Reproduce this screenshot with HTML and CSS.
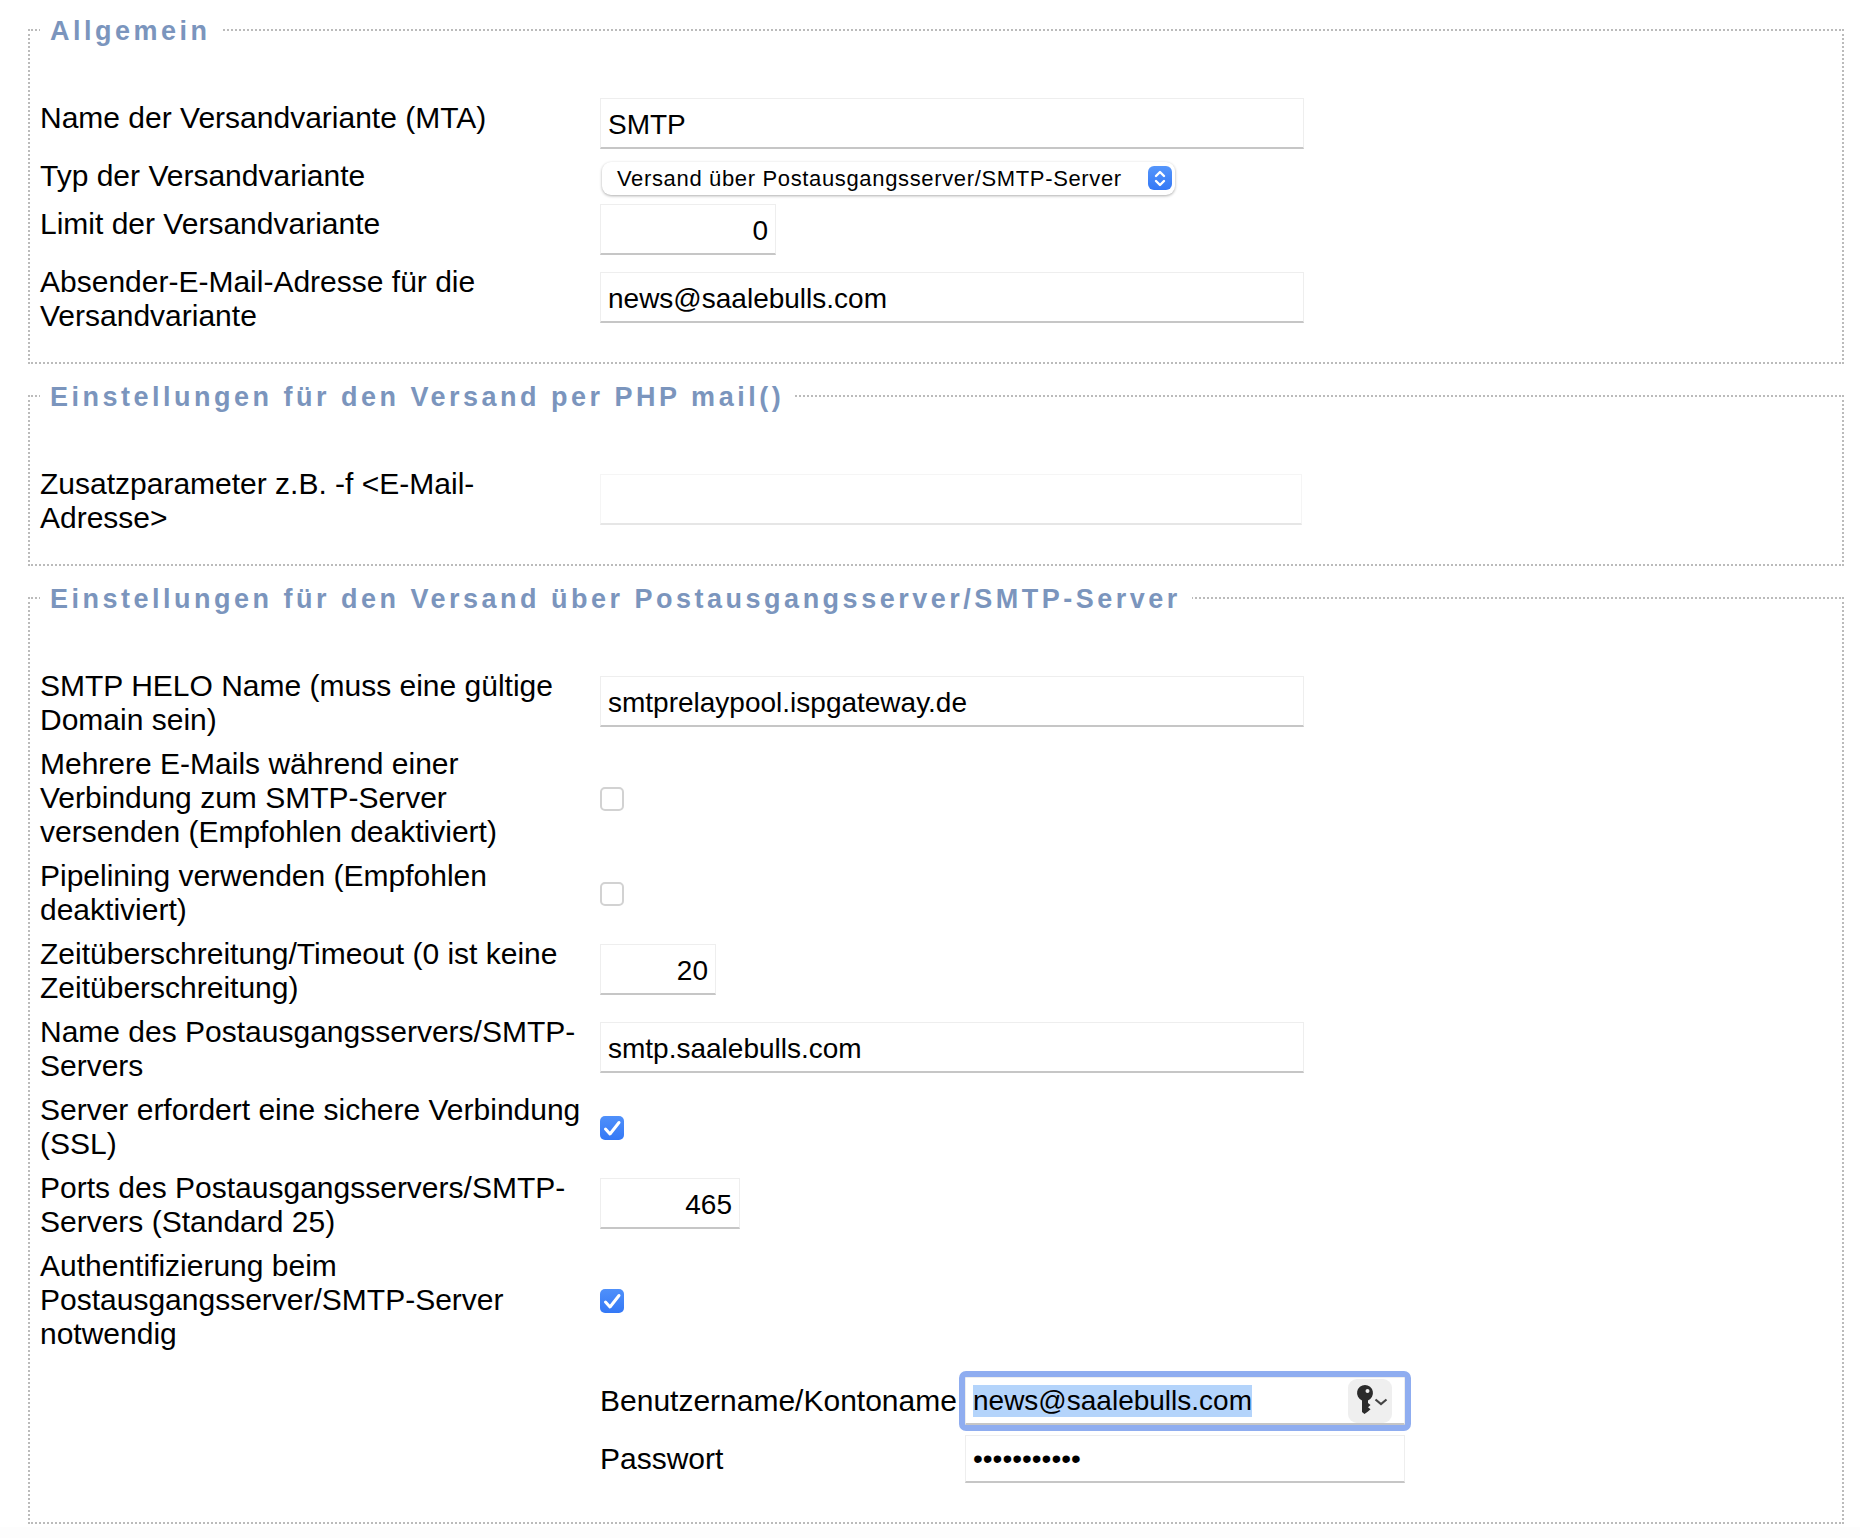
FILE: index.html
```html
<!DOCTYPE html>
<html lang="de">
<head>
<meta charset="utf-8">
<title>Versandvariante</title>
<link rel="stylesheet" href="styles.css">
</head>
<body>
<form class="page">
  <fieldset class="group group-first">
    <legend>Allgemein</legend>
    <table class="rows">
      <tr><th>Name der Versandvariante (MTA)</th><td><input class="field wide" value="SMTP"></td></tr>
      <tr class="select-row"><th>Typ der Versandvariante</th><td>
        <div class="select">
          <span class="select-text">Versand über Postausgangsserver/SMTP-Server</span>
          <span class="select-arrows"><svg viewBox="0 0 24 24" width="24" height="24"><path d="M8 10l4-4 4 4M8 15l4 4 4-4" fill="none" stroke="#fff" stroke-width="2.400" stroke-linecap="round" stroke-linejoin="round"/></svg></span>
        </div>
      </td></tr>
      <tr><th>Limit der Versandvariante</th><td><input class="field num limit" value="0"></td></tr>
      <tr><th>Absender-E-Mail-Adresse für die Versandvariante</th><td><input class="field wide" value="news@saalebulls.com"></td></tr>
    </table>
  </fieldset>

  <fieldset class="group">
    <legend>Einstellungen für den Versand per PHP mail()</legend>
    <table class="rows">
      <tr><th>Zusatzparameter z.B. -f &lt;E-Mail-Adresse&gt;</th><td><input class="field wide dim" value=""></td></tr>
    </table>
  </fieldset>

  <fieldset class="group group-last">
    <legend>Einstellungen für den Versand über Postausgangsserver/SMTP-Server</legend>
    <table class="rows">
      <tr><th>SMTP HELO Name (muss eine gültige Domain sein)</th><td><input class="field wide" value="smtprelaypool.ispgateway.de"></td></tr>
      <tr><th>Mehrere E-Mails während einer Verbindung zum SMTP-Server versenden (Empfohlen deaktiviert)</th><td><span class="check"></span></td></tr>
      <tr><th>Pipelining verwenden (Empfohlen deaktiviert)</th><td><span class="check"></span></td></tr>
      <tr><th>Zeitüberschreitung/Timeout (0 ist keine Zeitüberschreitung)</th><td><input class="field num timeout" value="20"></td></tr>
      <tr><th>Name des Postausgangsservers/SMTP-Servers</th><td><input class="field wide" value="smtp.saalebulls.com"></td></tr>
      <tr><th>Server erfordert eine sichere Verbindung (SSL)</th><td><span class="check on"><svg viewBox="0 0 24 24" width="24" height="24"><path d="M5.500 13l4.500 5L19 6.500" fill="none" stroke="#fff" stroke-width="3" stroke-linecap="round" stroke-linejoin="round"/></svg></span></td></tr>
      <tr><th>Ports des Postausgangsservers/SMTP-Servers (Standard 25)</th><td><input class="field num port" value="465"></td></tr>
      <tr><th>Authentifizierung beim Postausgangsserver/SMTP-Server notwendig</th><td><span class="check on"><svg viewBox="0 0 24 24" width="24" height="24"><path d="M5.500 13l4.500 5L19 6.500" fill="none" stroke="#fff" stroke-width="3" stroke-linecap="round" stroke-linejoin="round"/></svg></span></td></tr>
      <tr><th></th><td>
        <div class="login">
          <span class="login-label">Benutzername/Kontoname</span>
          <div class="field focused">
            <span class="selected">news@saalebulls.com</span>
            <span class="keybtn">
              <svg viewBox="0 0 44 44" width="44" height="44">
                <path fill="#2b2b2b" fill-rule="evenodd" d="M17 6a8 8 0 0 1 3 15.400V24l2.500 2-2.500 2.200 2.500 2-2.500 2.200L16.500 35 14 33V21.400A8 8 0 0 1 17 6zM19.500 10a2 2 0 1 0 0 4 2 2 0 0 0 0-4z"/>
                <path d="M27.500 20.500l5.500 4.500 5.500-4.500" fill="none" stroke="#444" stroke-width="2.200"/>
              </svg>
            </span>
          </div>
          <span class="login-label">Passwort</span>
          <input class="field pass" type="password" value="xxxxxxxxxxx">
        </div>
      </td></tr>
    </table>
  </fieldset>
</form>
</body>
</html>
```
FILE: styles.css
```css
html, body {
  margin: 0;
  padding: 0;
  background: #fdfdfd;
}
body {
  font-family: "Liberation Sans", Arial, sans-serif;
  color: #000;
}
.page {
  padding: 14px 16px 3px 28px;
  background: #fff;
}
.group {
  margin: 0 0 16px;
  padding: 50px 10px 24px;
  border: 2px dotted #bbb;
  min-width: 0;
}
.group-last { margin-bottom: 0; padding-bottom: 34px; }
legend {
  padding: 2px 11px 0 10px;
  font-size: 27px;
  line-height: 30px;
  font-weight: bold;
  letter-spacing: 3.5px;
  color: #7b95bd;
}
.rows {
  border-collapse: collapse;
  width: 100%;
}
.rows th {
  width: 560px;
  padding: 5px 15px 5px 0;
  box-sizing: border-box;
  text-align: left;
  vertical-align: top;
  font-weight: normal;
  font-size: 30px;
  line-height: 34px;
}
.rows td {
  padding: 2px 0 5px;
  vertical-align: middle;
}
.rows .select-row td { padding: 8px 0 7px; }
.field {
  display: block;
  box-sizing: border-box;
  height: 51px;
  margin: 0;
  padding: 4px 7px 0;
  border: 1px solid #eee;
  border-bottom: 2px solid #c6c6c6;
  border-radius: 0;
  outline: 0;
  background: #fff;
  font-family: inherit;
  font-size: 28px;
  color: #000;
}
.wide { width: 704px; }
.dim { width: 702px; border-color: #f5f5f5; border-bottom-color: #e6e6e6; }
.num { text-align: right; }
.limit { width: 176px; }
.timeout { width: 116px; }
.port { width: 140px; }
.select {
  position: relative;
  display: flex;
  align-items: center;
  box-sizing: border-box;
  width: 573px;
  height: 33px;
  margin-left: 2px;
  padding-left: 15px;
  background: #fff;
  border-radius: 9px;
  box-shadow: 0 1px 3px rgba(0, 0, 0, .32);
}
.select-text {
  font-size: 22px;
  letter-spacing: .65px;
  white-space: nowrap;
}
.select-arrows {
  position: absolute;
  right: 3px;
  top: 4px;
  width: 24px;
  height: 24px;
  border-radius: 6px;
  background: linear-gradient(#5596fb, #3478f6);
}
.select-arrows svg { display: block; }
.check {
  display: block;
  box-sizing: border-box;
  width: 24px;
  height: 24px;
  margin-top: 4px;
  border: 2px solid #d2d2d2;
  border-radius: 5px;
  background: #fff;
}
.check.on {
  border: 0;
  background: linear-gradient(#4f90fa, #3478f6);
}
.check svg { display: block; }
.login {
  display: grid;
  grid-template-columns: 365px 440px;
  grid-auto-rows: min-content;
  row-gap: 10px;
  align-items: center;
  padding: 19px 0 0;
  font-size: 30px;
}
.login-label { white-space: nowrap; }
.focused {
  position: relative;
  width: 440px;
  height: 48px;
  outline: 6px solid #8fadf0;
  border-radius: 1px;
  display: flex;
  align-items: center;
  padding: 0 0 0 7px;
}
.selected { background: #b4d4fb; line-height: 32px; }
.keybtn {
  position: absolute;
  right: 12px;
  top: 1px;
  width: 44px;
  height: 44px;
  border-radius: 9px;
  background: #efefef;
}
.keybtn svg { display: block; }
.pass { width: 440px; height: 48px; padding-top: 0; }
```
